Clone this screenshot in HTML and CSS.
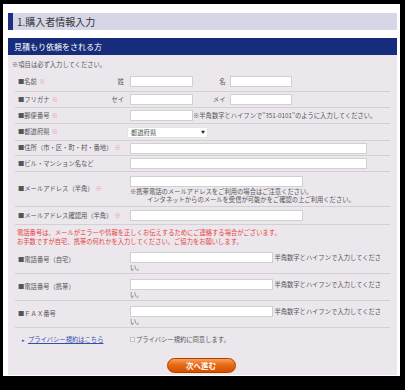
FILE: index.html
```html
<!DOCTYPE html>
<html lang="ja">
<head>
    <meta charset="UTF-8">
    <meta name="viewport" content="width=device-width, initial-scale=1.0">
    <title>購入者情報入力</title>
    <link rel="stylesheet" href="styles.css">
</head>
<body>
    <div class="page">
        <h2 class="title">1.購入者情報入力</h2>
        <h3 class="sectionBar">見積もり依頼をされる方</h3>

        <form class="formBox">
            <p class="note">※項目は必ず入力してください。</p>

            <div class="row rowName">
                <div class="label"><span>■名前<em>※</em></span><span>姓</span></div>
                <div class="field">
                    <input type="text" class="w63">
                    <span class="subLabel">名</span>
                    <input type="text" class="w62">
                </div>
            </div>
            <div class="row rowKana">
                <div class="label"><span>■フリガナ<em>※</em></span><span>セイ</span></div>
                <div class="field">
                    <input type="text" class="w63">
                    <span class="subLabel">メイ</span>
                    <input type="text" class="w62">
                </div>
            </div>
            <div class="row rowZip">
                <div class="label"><span>■郵便番号<em>※</em></span></div>
                <div class="field">
                    <input type="text" class="w63"><span class="hint">※半角数字とハイフンで"351-0101"のように入力してください。</span>
                </div>
            </div>
            <div class="row rowPref">
                <div class="label"><span>■都道府県<em>※</em></span></div>
                <div class="field">
                    <span class="selectWrap">
                        <select class="pref"><option>都道府県</option></select>
                        <span class="arrow">▼</span>
                    </span>
                </div>
            </div>
            <div class="row rowAddr">
                <div class="label"><span>■住所（市・区・町・村・番地）<em>※</em></span></div>
                <div class="field"><input type="text" class="w237"></div>
            </div>
            <div class="row rowBuild">
                <div class="label"><span>■ビル・マンション名など</span></div>
                <div class="field"><input type="text" class="w237"></div>
            </div>
            <div class="row rowMail">
                <div class="label"><span>■メールアドレス（半角）<em>※</em></span></div>
                <div class="field">
                    <input type="text" class="w173">
                    <div class="mailNote">※携帯電話のメールアドレスをご利用の場合はご注意ください。</div>
                    <div class="mailNote indent">インタネットからのメールを受信が可能かをご確認の上ご利用ください。</div>
                </div>
            </div>
            <div class="row rowConfirm">
                <div class="label"><span>■メールアドレス確認用（半角）<em>※</em></span></div>
                <div class="field"><input type="text" class="w173"></div>
            </div>

            <p class="telNote">電話番号は、メールがエラーや情報を正しくお伝えするためにご連絡する場合がございます。<br>お手数ですが自宅、携帯の何れかを入力してください。ご協力をお願いします。</p>

            <div class="row rowTel">
                <div class="label"><span>■電話番号（自宅）</span></div>
                <div class="field"><input type="text" class="w142"> <span class="hint">半角数字とハイフンで入力してください。</span></div>
            </div>
            <div class="row rowTel">
                <div class="label"><span>■電話番号（携帯）</span></div>
                <div class="field"><input type="text" class="w142"> <span class="hint">半角数字とハイフンで入力してください。</span></div>
            </div>
            <div class="row rowTel">
                <div class="label"><span>■ＦＡＸ番号</span></div>
                <div class="field"><input type="text" class="w142"> <span class="hint">半角数字とハイフンで入力してください。</span></div>
            </div>

            <div class="privacy">
                <div class="privacyLink"><span class="bullet">▸</span><a href="#">プライバシー規約はこちら</a></div>
                <label class="agree"><input type="checkbox" class="check">プライバシー規約に同意します。</label>
            </div>

            <div class="buttonArea">
                <button type="button" class="nextButton">次へ進む</button>
            </div>
        </form>
    </div>
</body>
</html>
```

FILE: styles.css
```css
body {
    margin: 0;
    background: #000;
    font-family: "Noto Sans CJK JP", "Noto Sans", sans-serif;
    color: #555;
}

.page {
    width: 397px;
    height: 372px;
    margin: 4px 0 0 3px;
    padding: 9px 3px 0 5px;
    box-sizing: border-box;
    background: #fff;
}

.title {
    margin: 0;
    height: 17px;
    line-height: 17px;
    padding-left: 4px;
    border-left: 5px solid #1d2f80;
    background: #d5d7e7;
    color: #333;
    font-size: 10px;
    font-weight: normal;
}

.sectionBar {
    margin: 8px 0 0;
    height: 17px;
    line-height: 17px;
    padding-left: 6px;
    background: #172d7c;
    color: #fff;
    font-size: 8px;
    font-weight: normal;
}

.formBox {
    height: 320px;
    padding: 0 7px 0 4px;
    background: #ece7ed;
    font-size: 6.3px;
}

.note {
    margin: 0;
    height: 17px;
    padding-top: 2px;
    line-height: 16px;
    box-sizing: border-box;
}

.row {
    display: flex;
    align-items: center;
    margin-left: 3px;
    border-bottom: 1px solid #d3cfd4;
    box-sizing: border-box;
}

.label {
    flex: none;
    width: 115px;
    display: flex;
    justify-content: space-between;
    padding: 0 6px 0 3px;
    box-sizing: border-box;
    line-height: 8px;
    white-space: nowrap;
}

.label em {
    font-style: normal;
    color: #eaa0a0;
    margin-left: 2px;
}

.field {
    flex: 1;
    line-height: 8px;
}

.rowName { height: 20px; }
.rowKana { height: 16px; }
.rowZip { height: 16px; }
.rowPref { height: 17px; }
.rowAddr { height: 15px; }
.rowBuild { height: 16px; }
.rowConfirm { height: 18px; }

.rowMail {
    height: 35px;
    align-items: flex-start;
}

.rowMail .label {
    align-self: center;
}

.rowMail .field {
    padding-top: 4px;
}

.rowTel {
    height: 27px;
    align-items: flex-start;
}

.rowTel .label {
    align-self: center;
}

.rowTel .field {
    padding: 5px 6px 0 0;
    line-height: 10px;
}

input[type="text"] {
    height: 11px;
    padding: 0;
    margin: 0;
    border: 1px solid #d0d0d0;
    background: #fff;
    box-sizing: border-box;
    vertical-align: middle;
}

.w63 { width: 63px; }
.w62 { width: 62px; }
.w142 { width: 143px; }
.w173 { width: 173px; }
.w237 { width: 237px; }

.subLabel {
    display: inline-block;
    width: 34px;
    padding-right: 3px;
    box-sizing: border-box;
    text-align: right;
    vertical-align: middle;
}

.hint {
    vertical-align: middle;
}

.selectWrap {
    position: relative;
    display: inline-block;
    margin-left: -3px;
}

.pref {
    appearance: none;
    display: block;
    width: 81px;
    height: 11px;
    margin: 0;
    padding: 0 0 0 3px;
    border: 1px solid #e4e4e4;
    background: #fff;
    color: #555;
    font-family: inherit;
    font-size: 6.3px;
    line-height: 9px;
}

.arrow {
    position: absolute;
    right: 3px;
    top: 2px;
    font-size: 4px;
    line-height: 6px;
    color: #222;
}

.mailNote {
    line-height: 8px;
}

.mailNote:first-of-type {
    margin-top: 1px;
}

.indent {
    padding-left: 17px;
}

.telNote {
    margin: 0 0 0 5px;
    height: 22px;
    padding-top: 3px;
    line-height: 9px;
    box-sizing: border-box;
    color: #e8423c;
}

.privacy {
    display: flex;
    align-items: center;
    height: 22px;
    margin-left: 3px;
}

.privacyLink {
    width: 115px;
    flex: none;
    padding-left: 7px;
    box-sizing: border-box;
}

.bullet {
    color: #3050a0;
    font-size: 5px;
    margin-right: 3px;
}

.privacyLink a {
    color: #3352a8;
}

.agree {
    display: flex;
    align-items: center;
}

.check {
    appearance: none;
    width: 5px;
    height: 5px;
    margin: 0 1px 0 0;
    border: 1px solid #c4c4c4;
    background: #f2f2f2;
}

.buttonArea {
    margin-top: 8px;
    text-align: center;
}

.nextButton {
    width: 69px;
    height: 15px;
    padding: 0;
    border: 1px solid #a84000;
    border-radius: 8px;
    background: linear-gradient(#f7a060, #e86a14 45%, #d05200);
    box-shadow: 0 0 0 1px #fbe2d0;
    color: #fff;
    font-family: inherit;
    font-size: 7.5px;
    font-weight: bold;
    line-height: 13px;
    cursor: pointer;
}
```
